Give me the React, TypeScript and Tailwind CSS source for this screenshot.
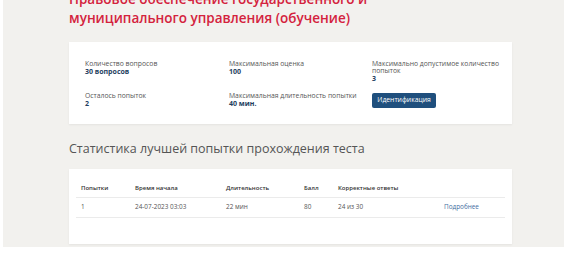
import React from 'react';

const font = { fontFamily: '"Open Sans", "Noto Sans", sans-serif' };

const rows = [
  { n: '1', start: '24-07-2023 03:03', dur: '22 мин', score: '80', correct: '24 из 30' },
];

export default function App() {
  return (
    <div className="min-h-[270px] bg-white overflow-hidden" style={font}>
      <div className="ml-[3px] w-[561px] bg-[#f2f1ee] pl-[66px] pb-[3px]">
        <h1 className="-mt-[10px] w-[310px] text-[13.5px] leading-[19px] font-semibold text-[#d4223d]">
          Правовое обеспечение государственного и муниципального управления (обучение)
        </h1>

        <div className="mt-[14px] w-[443px] bg-white pl-4 pt-[19px] pb-4 shadow-[0_1px_2px_rgba(0,0,0,0.06)]">
          <div className="grid grid-cols-[144px_143px_144px] gap-y-[11px]">
            <div>
              <div className="text-[6.8px] leading-[6.5px] text-[#555]">Количество вопросов</div>
              <div className="mt-[0.5px] text-[7px] leading-[7px] font-bold text-[#243e5e]">30 вопросов</div>
            </div>
            <div>
              <div className="text-[6.8px] leading-[6.5px] text-[#555]">Максимальная оценка</div>
              <div className="mt-[0.5px] text-[7px] leading-[7px] font-bold text-[#243e5e]">100</div>
            </div>
            <div>
              <div className="w-[128px] text-[6.8px] leading-[6.5px] text-[#555]">
                Максимально допустимое количество попыток
              </div>
              <div className="mt-[0.5px] text-[7px] leading-[7px] font-bold text-[#243e5e]">3</div>
            </div>
            <div>
              <div className="text-[6.8px] leading-[6.5px] text-[#555]">Осталось попыток</div>
              <div className="mt-[0.5px] text-[7px] leading-[7px] font-bold text-[#243e5e]">2</div>
            </div>
            <div>
              <div className="text-[6.8px] leading-[6.5px] text-[#555]">Максимальная длительность попытки</div>
              <div className="mt-[0.5px] text-[7px] leading-[7px] font-bold text-[#243e5e]">40 мин.</div>
            </div>
            <div>
              <button className="flex h-[15px] w-[64px] items-center justify-center rounded-[2px] bg-[#1f4f7d] text-[6.8px] font-medium text-white">
                Идентификация
              </button>
            </div>
          </div>
        </div>

        <h2 className="mt-4 text-[12.5px] leading-[18px] text-[#555]">
          Статистика лучшей попытки прохождения теста
        </h2>

        <div className="mt-[11px] w-[443px] bg-white px-[7px] pt-[11px] pb-[26px] shadow-[0_1px_2px_rgba(0,0,0,0.06)]">
          <div className="grid h-[18px] grid-cols-[54px_91px_78px_34px_106px_66px] items-center border-b border-[#ebebeb] text-[6px] font-semibold text-[#333]">
            <div className="pl-[5px]">Попытки</div>
            <div className="pl-[5px]">Время начала</div>
            <div className="pl-[5px]">Длительность</div>
            <div className="pl-[5px]">Балл</div>
            <div className="pl-[5px]">Корректные ответы</div>
            <div className="pl-[5px]"></div>
          </div>
          {rows.map((r) => (
            <div
              key={r.n}
              className="grid h-[20px] grid-cols-[54px_91px_78px_34px_106px_66px] items-center border-b border-[#ebebeb] text-[6.4px] text-[#555]"
            >
              <div className="pl-[5px]">{r.n}</div>
              <div className="pl-[5px]">{r.start}</div>
              <div className="pl-[5px]">{r.dur}</div>
              <div className="pl-[5px]">{r.score}</div>
              <div className="pl-[5px]">{r.correct}</div>
              <div className="pl-[5px] text-[#3f6e9f]">Подробнее</div>
            </div>
          ))}
        </div>
      </div>
    </div>
  );
}
